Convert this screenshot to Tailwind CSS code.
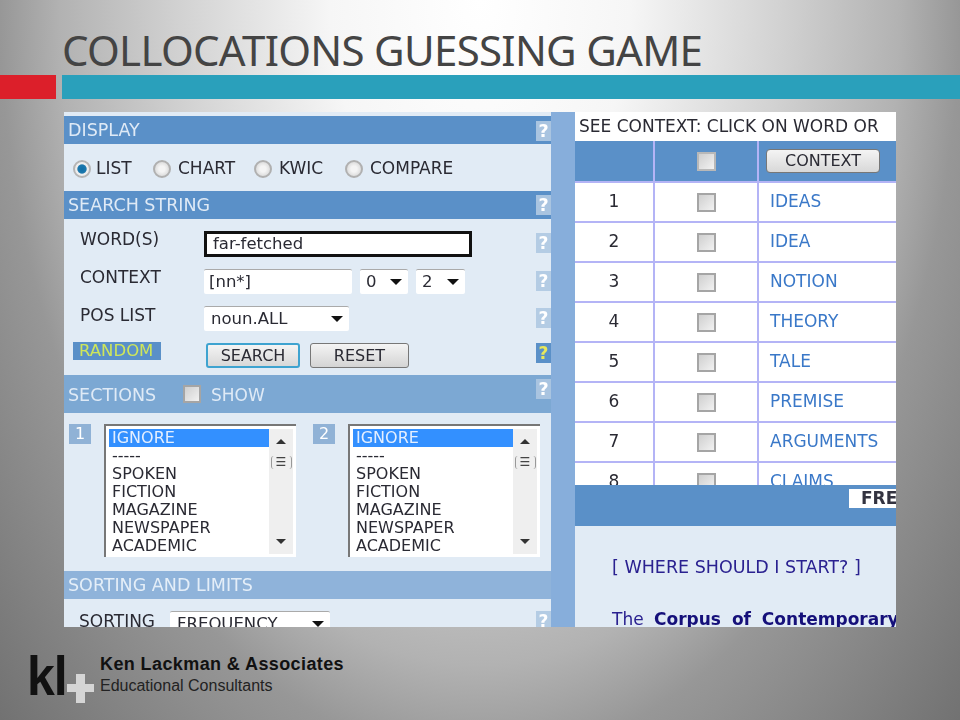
<!DOCTYPE html>
<html lang="en">
<head>
<meta charset="UTF-8">
<title>Collocations Guessing Game</title>
<script src="https://cdn.jsdelivr.net/npm/@tailwindcss/browser@4"></script>
</head>
<body class="w-[960px] h-[720px] overflow-hidden bg-[radial-gradient(ellipse_600px_950px_at_50%_0%,#ffffff_0%,#f6f6f6_25%,#d2d2d2_50%,#b2b2b2_70%,#979797_80%,#727272_110%)] font-['Liberation_Sans',sans-serif]">

  <!-- slide title + bars -->
  <h1 class="h-[75px] pl-[62px] pt-[25px] text-[42px] leading-[50px] tracking-[-0.7px] text-[#444444] font-['Noto_Sans',sans-serif]">COLLOCATIONS GUESSING GAME</h1>
  <div class="flex gap-[6px] h-[24px]">
    <div class="w-[56px] bg-[#dc1f2a]"></div>
    <div class="flex-1 bg-[#2aa0bb]"></div>
  </div>

  <!-- embedded screenshot -->
  <div class="mt-[13px] ml-[64px] w-[832px] h-[515px] overflow-hidden flex font-['DejaVu_Sans',sans-serif] text-[17px] text-[#2a2a33] blur-[0.3px]">

    <!-- left panel -->
    <div class="w-[487px] shrink-0 bg-[#e1ebf5] flex flex-col">
      <div class="h-[4px] shrink-0"></div>
      <div class="h-[28px] shrink-0 bg-[#5a90c8] flex items-center justify-between text-[#dfeaf6] pl-[4px] text-[17.5px]">
        <span>DISPLAY</span>
        <span class="mt-[2px] w-[15px] h-[20px] bg-[#a9c4e0] text-white font-bold text-center leading-[20px]">?</span>
      </div>
      <div class="h-[47px] shrink-0 flex items-center pl-[9px] pt-[2px]">
        <span class="w-[18px] h-[18px] rounded-full border-2 border-[#b5b5b5] bg-[radial-gradient(circle,#0f6fa8_0%,#1d78ad_42%,#eeeeee_52%)]"></span>
        <span class="ml-[5px] w-[57px]">LIST</span>
        <span class="w-[18px] h-[18px] rounded-full border-2 border-[#b0b0b0] bg-[radial-gradient(circle,#f4f4f4_30%,#cdcdcd_100%)]"></span>
        <span class="ml-[7px] w-[76px]">CHART</span>
        <span class="w-[18px] h-[18px] rounded-full border-2 border-[#b0b0b0] bg-[radial-gradient(circle,#f4f4f4_30%,#cdcdcd_100%)]"></span>
        <span class="ml-[7px] w-[66px]">KWIC</span>
        <span class="w-[18px] h-[18px] rounded-full border-2 border-[#b0b0b0] bg-[radial-gradient(circle,#f4f4f4_30%,#cdcdcd_100%)]"></span>
        <span class="ml-[7px]">COMPARE</span>
      </div>
      <div class="h-[28px] shrink-0 bg-[#5a90c8] flex items-center justify-between text-[#dfeaf6] pl-[4px] text-[17.5px]">
        <span>SEARCH STRING</span>
        <span class="w-[15px] h-[20px] bg-[#a9c4e0] text-white font-bold text-center leading-[20px]">?</span>
      </div>

      <div class="h-[156px] shrink-0 flex flex-col pt-[8px] leading-[24px]">
        <div class="h-[38px] flex items-start">
          <span class="w-[140px] pl-[16px]">WORD(S)</span>
          <span class="mt-[4px] w-[268px] h-[26px] border-[3px] border-[#111111] bg-white pl-[6px] leading-[20px] text-[16.5px]">far-fetched</span>
          <span class="ml-auto mt-[6px] w-[15px] h-[20px] bg-[#b4cce4] text-white font-bold text-center leading-[20px]">?</span>
        </div>
        <div class="h-[38px] flex items-start">
          <span class="w-[140px] pl-[16px]">CONTEXT</span>
          <span class="mt-[4px] w-[148px] h-[25px] bg-white rounded-[2px] border-t border-t-[#aaaaaa] pl-[5px] leading-[24px] text-[16.5px]">[nn*]</span>
          <span class="mt-[4px] ml-[8px] w-[48px] h-[25px] bg-white rounded-[2px] border-t border-t-[#aaaaaa] pl-[6px] flex items-center justify-between pr-[6px] text-[16.5px]">0<span class="w-0 h-0 border-x-[6px] border-x-transparent border-t-[6px] border-t-[#111111]"></span></span>
          <span class="mt-[4px] ml-[8px] w-[49px] h-[25px] bg-white rounded-[2px] border-t border-t-[#aaaaaa] pl-[6px] flex items-center justify-between pr-[6px] text-[16.5px]">2<span class="w-0 h-0 border-x-[6px] border-x-transparent border-t-[6px] border-t-[#111111]"></span></span>
          <span class="ml-auto mt-[6px] w-[15px] h-[20px] bg-[#b4cce4] text-white font-bold text-center leading-[20px]">?</span>
        </div>
        <div class="h-[38px] flex items-start">
          <span class="w-[140px] pl-[16px]">POS LIST</span>
          <span class="mt-[3px] w-[145px] h-[25px] bg-white rounded-[2px] border-t border-t-[#aaaaaa] pl-[7px] flex items-center justify-between pr-[6px] text-[16.5px]">noun.ALL<span class="w-0 h-0 border-x-[6px] border-x-transparent border-t-[6px] border-t-[#111111]"></span></span>
          <span class="ml-auto mt-[5px] w-[15px] h-[20px] bg-[#b4cce4] text-white font-bold text-center leading-[20px]">?</span>
        </div>
        <div class="flex items-start">
          <span class="mt-[1px] ml-[9px] w-[88px] h-[18px] bg-[#5a90c8] text-[#cfe65a] text-[16.5px] leading-[18px] pl-[6px]">RANDOM</span>
          <span class="mt-[2px] ml-[45px] w-[94px] h-[25px] rounded-[3px] border-2 border-[#3ea3d0] bg-[linear-gradient(#f4f4f4,#d8d8d8)] text-center text-[16px] leading-[21px]">SEARCH</span>
          <span class="mt-[2px] ml-[10px] w-[99px] h-[25px] rounded-[3px] border border-[#777777] bg-[linear-gradient(#f4f4f4,#d4d4d4)] text-center text-[16px] leading-[23px]">RESET</span>
          <span class="ml-auto mt-[2px] w-[15px] h-[20px] bg-[#5a90c8] text-[#e8e85a] font-bold text-center leading-[20px]">?</span>
        </div>
      </div>

      <div class="h-[38px] shrink-0 bg-[#7ca8d3] flex items-center text-[#dfeaf6] pl-[4px] pt-[3px] text-[17.5px]">
        <span class="w-[115px]">SECTIONS</span>
        <span class="mb-[4px] w-[18px] h-[18px] border-2 border-[#a5a5a5] bg-[linear-gradient(135deg,#cfcfcf,#f2f2f2)]"></span>
        <span class="ml-[10px] text-[17px]">SHOW</span>
        <span class="ml-auto self-start mt-[1px] w-[15px] h-[20px] bg-[#a9c4e0] text-white font-bold text-center leading-[20px]">?</span>
      </div>

      <div class="h-[158px] shrink-0 flex pt-[11px] text-[16px]">
        <span class="ml-[5px] w-[22px] h-[20px] bg-[#90b2d6] text-white text-center leading-[20px]">1</span>
        <div class="ml-[13px] w-[192px] h-[133px] bg-white border-l-2 border-t-2 border-l-[#777777] border-t-[#777777] flex pt-[3px] pl-[3px] pb-[3px] pr-[3px]">
          <div class="flex-1 leading-[18px]">
            <div class="bg-[#3390ff] text-[#e4efff] pl-[3px]">IGNORE</div>
            <div class="pl-[3px]">-----</div>
            <div class="pl-[3px]">SPOKEN</div>
            <div class="pl-[3px]">FICTION</div>
            <div class="pl-[3px]">MAGAZINE</div>
            <div class="pl-[3px]">NEWSPAPER</div>
            <div class="pl-[3px]">ACADEMIC</div>
          </div>
          <div class="w-[24px] bg-[#efefef] flex flex-col items-center justify-between py-[10px]">
            <span class="w-0 h-0 border-x-[5px] border-x-transparent border-b-[5px] border-b-[#333333]"></span>
            <span class="absolute mt-[17px] w-[21px] h-[13px] border-x border-[#999999] rounded-[3px] text-[12px] font-bold leading-[12px] text-center text-[#444444]">☰</span>
            <span class="w-0 h-0 border-x-[5px] border-x-transparent border-t-[5px] border-t-[#333333]"></span>
          </div>
        </div>
        <span class="ml-[17px] w-[22px] h-[20px] bg-[#90b2d6] text-white text-center leading-[20px]">2</span>
        <div class="ml-[13px] w-[192px] h-[133px] bg-white border-l-2 border-t-2 border-l-[#777777] border-t-[#777777] flex pt-[3px] pl-[3px] pb-[3px] pr-[3px]">
          <div class="flex-1 leading-[18px]">
            <div class="bg-[#3390ff] text-[#e4efff] pl-[3px]">IGNORE</div>
            <div class="pl-[3px]">-----</div>
            <div class="pl-[3px]">SPOKEN</div>
            <div class="pl-[3px]">FICTION</div>
            <div class="pl-[3px]">MAGAZINE</div>
            <div class="pl-[3px]">NEWSPAPER</div>
            <div class="pl-[3px]">ACADEMIC</div>
          </div>
          <div class="w-[24px] bg-[#efefef] flex flex-col items-center justify-between py-[10px]">
            <span class="w-0 h-0 border-x-[5px] border-x-transparent border-b-[5px] border-b-[#333333]"></span>
            <span class="absolute mt-[17px] w-[21px] h-[13px] border-x border-[#999999] rounded-[3px] text-[12px] font-bold leading-[12px] text-center text-[#444444]">☰</span>
            <span class="w-0 h-0 border-x-[5px] border-x-transparent border-t-[5px] border-t-[#333333]"></span>
          </div>
        </div>
      </div>

      <div class="h-[28px] shrink-0 bg-[#8fb3da] flex items-center text-[#e4eef8] pl-[4px] text-[17.5px]">SORTING AND LIMITS</div>
      <div class="flex pt-[10px] shrink-0 leading-[24px]">
        <span class="w-[106px] pl-[15px]">SORTING</span>
        <span class="mt-[2px] w-[160px] h-[25px] bg-white rounded-[2px] border-t border-t-[#aaaaaa] pl-[7px] flex items-center justify-between pr-[6px] text-[16.5px]">FREQUENCY<span class="w-0 h-0 border-x-[6px] border-x-transparent border-t-[6px] border-t-[#111111]"></span></span>
        <span class="ml-auto mt-[2px] w-[15px] h-[20px] bg-[#b4cce4] text-white font-bold text-center leading-[20px]">?</span>
      </div>
    </div>

    <!-- gutter -->
    <div class="w-[24px] shrink-0 bg-[#87aedb]"></div>

    <!-- right panel -->
    <div class="flex-1 bg-[#e1ebf5] flex flex-col min-w-0">
      <div class="h-[29px] shrink-0 bg-white pl-[4px] leading-[29px] whitespace-nowrap">SEE CONTEXT: CLICK ON WORD OR</div>
      <div class="h-[344px] shrink-0 overflow-hidden bg-white">
        <div class="grid grid-cols-[80px_104px_137px] grid-rows-[42px] auto-rows-[40px]">
          <div class="bg-[#5a90c8] border-r-2 border-b-2 border-[#b4b4f6]"></div>
          <div class="bg-[#5a90c8] border-r-2 border-b-2 border-[#b4b4f6] flex items-center justify-center"><span class="w-[19px] h-[19px] border-2 border-[#b8b8b8] bg-[linear-gradient(135deg,#cfcfcf,#f2f2f2)]"></span></div>
          <div class="bg-[#5a90c8] border-b-2 border-[#b4b4f6] pl-[7px] pt-[8px]"><span class="block w-[114px] h-[24px] rounded-[4px] border border-[#777777] bg-[linear-gradient(#f4f4f4,#d8d8d8)] text-center leading-[22px] text-[16px]">CONTEXT</span></div>

          <div class="border-r-2 border-b-2 border-[#b4b4f6] flex items-center justify-center">1</div>
          <div class="border-r-2 border-b-2 border-[#b4b4f6] flex items-center justify-center"><span class="w-[19px] h-[19px] border-2 border-[#a5a5a5] bg-[linear-gradient(135deg,#cfcfcf,#f2f2f2)]"></span></div>
          <div class="border-b-2 border-[#b4b4f6] flex items-center pl-[11px] text-[#3a78c8]">IDEAS</div>

          <div class="border-r-2 border-b-2 border-[#b4b4f6] flex items-center justify-center">2</div>
          <div class="border-r-2 border-b-2 border-[#b4b4f6] flex items-center justify-center"><span class="w-[19px] h-[19px] border-2 border-[#a5a5a5] bg-[linear-gradient(135deg,#cfcfcf,#f2f2f2)]"></span></div>
          <div class="border-b-2 border-[#b4b4f6] flex items-center pl-[11px] text-[#3a78c8]">IDEA</div>

          <div class="border-r-2 border-b-2 border-[#b4b4f6] flex items-center justify-center">3</div>
          <div class="border-r-2 border-b-2 border-[#b4b4f6] flex items-center justify-center"><span class="w-[19px] h-[19px] border-2 border-[#a5a5a5] bg-[linear-gradient(135deg,#cfcfcf,#f2f2f2)]"></span></div>
          <div class="border-b-2 border-[#b4b4f6] flex items-center pl-[11px] text-[#3a78c8]">NOTION</div>

          <div class="border-r-2 border-b-2 border-[#b4b4f6] flex items-center justify-center">4</div>
          <div class="border-r-2 border-b-2 border-[#b4b4f6] flex items-center justify-center"><span class="w-[19px] h-[19px] border-2 border-[#a5a5a5] bg-[linear-gradient(135deg,#cfcfcf,#f2f2f2)]"></span></div>
          <div class="border-b-2 border-[#b4b4f6] flex items-center pl-[11px] text-[#3a78c8]">THEORY</div>

          <div class="border-r-2 border-b-2 border-[#b4b4f6] flex items-center justify-center">5</div>
          <div class="border-r-2 border-b-2 border-[#b4b4f6] flex items-center justify-center"><span class="w-[19px] h-[19px] border-2 border-[#a5a5a5] bg-[linear-gradient(135deg,#cfcfcf,#f2f2f2)]"></span></div>
          <div class="border-b-2 border-[#b4b4f6] flex items-center pl-[11px] text-[#3a78c8]">TALE</div>

          <div class="border-r-2 border-b-2 border-[#b4b4f6] flex items-center justify-center">6</div>
          <div class="border-r-2 border-b-2 border-[#b4b4f6] flex items-center justify-center"><span class="w-[19px] h-[19px] border-2 border-[#a5a5a5] bg-[linear-gradient(135deg,#cfcfcf,#f2f2f2)]"></span></div>
          <div class="border-b-2 border-[#b4b4f6] flex items-center pl-[11px] text-[#3a78c8]">PREMISE</div>

          <div class="border-r-2 border-b-2 border-[#b4b4f6] flex items-center justify-center">7</div>
          <div class="border-r-2 border-b-2 border-[#b4b4f6] flex items-center justify-center"><span class="w-[19px] h-[19px] border-2 border-[#a5a5a5] bg-[linear-gradient(135deg,#cfcfcf,#f2f2f2)]"></span></div>
          <div class="border-b-2 border-[#b4b4f6] flex items-center pl-[11px] text-[#3a78c8]">ARGUMENTS</div>

          <div class="border-r-2 border-b-2 border-[#b4b4f6] flex items-center justify-center">8</div>
          <div class="border-r-2 border-b-2 border-[#b4b4f6] flex items-center justify-center"><span class="w-[19px] h-[19px] border-2 border-[#a5a5a5] bg-[linear-gradient(135deg,#cfcfcf,#f2f2f2)]"></span></div>
          <div class="border-b-2 border-[#b4b4f6] flex items-center pl-[11px] text-[#3a78c8]">CLAIMS</div>
        </div>
      </div>
      <div class="h-[41px] shrink-0 bg-[#5a90c8] pt-[4px] flex justify-end">
        <span class="w-[47px] h-[19px] bg-white pl-[12px] font-bold leading-[19px] text-[#333340]">FRE</span>
      </div>
      <div class="pl-[37px] pt-[29px] text-[#2a2190] text-[17.5px] leading-[24px] whitespace-nowrap">[ WHERE SHOULD I START? ]</div>
      <div class="pl-[37px] pt-[28px] text-[#2a2190] leading-[24px] whitespace-nowrap [word-spacing:5px]">The <b class="text-[#15107a]">Corpus of Contemporary</b></div>
    </div>
  </div>

  <!-- footer logo -->
  <div class="mt-[4px] flex items-start h-[85px]">
    <div class="relative ml-[27px] w-[68px] h-[80px]">
      <span class="absolute left-0 top-[17px] origin-top scale-y-[1.12] text-[#111111] font-bold text-[50px] leading-[50px] tracking-[-1px]">kl</span>
      <span class="absolute left-[49px] top-[43px] w-[9px] h-[29px] bg-[#d5d5d5]"></span>
      <span class="absolute left-[40px] top-[53px] w-[27px] h-[8px] bg-[#d5d5d5]"></span>
    </div>
    <div class="ml-[5px] mt-[23px]">
      <div class="text-[18px] leading-[21px] tracking-[0.4px] font-bold text-[#111111]">Ken Lackman &amp; Associates</div>
      <div class="text-[16px] leading-[21px] text-[#222222]">Educational Consultants</div>
    </div>
  </div>
</body>
</html>
